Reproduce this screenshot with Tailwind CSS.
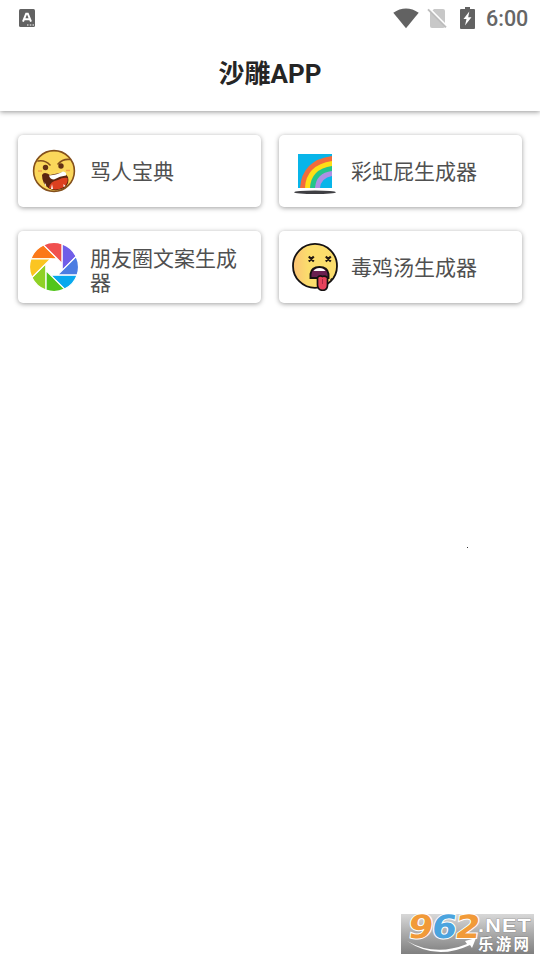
<!DOCTYPE html>
<html lang="zh-CN">
<head>
<meta charset="utf-8">
<title>沙雕APP</title>
<script src="https://cdn.jsdelivr.net/npm/@tailwindcss/browser@4"></script>
</head>
<body class="relative flex h-[960px] w-[540px] flex-col overflow-hidden bg-white font-[Roboto,'Noto_Sans_CJK_SC',sans-serif]">
<div class="relative z-10 flex h-9 shrink-0 items-center justify-between bg-white pl-[19px] pr-3">
  <svg class="h-[18px] w-4" viewBox="0 0 16 18"><rect width="16" height="18" rx="1.5" fill="#626262"/><path d="M4 12.7 7.2 4.7h1.6l3.2 8M5.4 10.2h5.2" fill="none" stroke="#fff" stroke-width="2"/><path d="M8 16h1.5M10.8 16h1.5M13.5 16H15" stroke="#fff" stroke-width="1.2"/></svg>
  <div class="flex items-center">
    <svg class="h-[21px] w-[27px]" viewBox="0 0 27 21"><path d="M.3 4.8C8.3-1.1 17.7-1.1 25.7 4.8L13 20.3Z" fill="#626262"/></svg>
    <svg class="ml-[7px] h-[21px] w-[21px]" viewBox="0 0 21 21"><path d="M3 5 7 1h9q2 0 2 2v15q0 2-2 2H5q-2 0-2-2Z" fill="#c8c8c8"/><path d="M2.5.8 20.5 18.8" stroke="#fff" stroke-width="2"/><path d="M1 1.4 19 19.4" stroke="#bdbdbd" stroke-width="1.9"/></svg>
    <svg class="ml-[12px] h-[23px] w-[15px]" viewBox="0 0 15 23"><path d="M5 0h5v2h4q1 0 1 1v18q0 1-1 1H1q-1 0-1-1V3q0-1 1-1h4Z" fill="#626262"/><path d="M9.3 4.5 3.5 12h3L5 18.5l6.5-8.2H8.2Z" fill="#fff"/></svg>
    <span class="ml-[11px] mt-[2px] w-[42px] whitespace-nowrap text-[21.5px] leading-6 font-medium text-[#666]">6:00</span>
  </div>
</div>
<header class="flex h-[75px] shrink-0 items-center justify-center bg-white shadow-[0_1px_5px_rgba(0,0,0,.42)]">
  <h1 class="text-[26px] leading-9 font-bold text-[#252525]">沙雕APP</h1>
</header>
<main class="grid grid-cols-[243px_243px] gap-x-[18px] gap-y-6 px-[18px] pt-6">
  <div class="flex h-[72px] items-center rounded-[5px] bg-white pl-3 shadow-[0_1px_5px_rgba(0,0,0,.38)]">
    <svg class="h-12 w-12 shrink-0" viewBox="0 0 48 48">
      <circle cx="24" cy="24" r="20.4" fill="#fbd75b" stroke="#84501c" stroke-width="1.6"/>
      <path d="M8 14Q15 12.500 20 18M40 12.500Q33 11.500 28 17" fill="none" stroke="#84501c" stroke-width="1.6" stroke-linecap="round"/>
      <circle cx="15.500" cy="20.500" r="2.700" fill="#623115"/><circle cx="31" cy="19" r="2.700" fill="#623115"/>
      <path d="M8 24h4M36 23.500h4" stroke="#f4a04c" stroke-width="1.3"/>
      <path d="M12 28Q14 24 20 28L34 25 38 30Q40 37 34 41 26 45 19 41.500 12 37 12 28Z" fill="#5c2510"/>
      <path d="M19 41Q20 34 28 33 33 30 37.500 31 38.500 37 33 40.500 26 44 19 41Z" fill="#dc4020"/>
      <path d="M19 28.500Q27 28 33 24.500 37 25 36 28.500 30 29 24 32.500 20 32.500 19 28.500Z" fill="#fff"/>
      <path d="m14.500 35 1.800 3.500-1 .5zm7.500 2 1 5h-2zm11.500 0 2 2-2 1z" fill="#fff"/>
    </svg>
    <span class="mt-[2px] ml-3 text-[21px] leading-6 text-[#505050]">骂人宝典</span>
  </div>
  <div class="flex h-[72px] items-center rounded-[5px] bg-white pl-3 shadow-[0_1px_5px_rgba(0,0,0,.38)]">
    <svg class="h-12 w-12 shrink-0" viewBox="0 0 48 48">
      <path d="M7 7h34v34H7z" fill="#08b5e9"/>
      <path d="M9 41Q11 13 41 9v32Z" fill="#f36b3b"/><path d="M14 41Q15 18 41 14v27Z" fill="#ffde17"/><path d="M19 41Q20 22 41 19v22Z" fill="#24c58a"/><path d="M24 41Q25 26 41 24v17Z" fill="#ad91e4"/><path d="M29 41Q30 31 41 29v12Z" fill="#08b5e9"/>
      <ellipse cx="24" cy="45.200" rx="21" ry="1.800" fill="#3f3f43"/>
    </svg>
    <span class="mt-[2px] ml-3 text-[21px] leading-6 text-[#505050]">彩虹屁生成器</span>
  </div>
  <div class="flex h-[72px] items-center rounded-[5px] bg-white pl-3 shadow-[0_1px_5px_rgba(0,0,0,.38)]">
    <svg class="h-12 w-12 shrink-0" viewBox="-23.500 -23.500 47 47">
      <defs><path id="b" d="M-22.600-8A24 24 0 0 1-10.300-21.650L3.300-8Z"/></defs>
      <g stroke="#fff" stroke-width="1.200">
        <use href="#b" fill="#fb7818"/><use href="#b" fill="#f0504f" transform="rotate(45)"/><use href="#b" fill="#705ee8" transform="rotate(90)"/><use href="#b" fill="#4c7de2" transform="rotate(135)"/><use href="#b" fill="#08a9ee" transform="rotate(180)"/><use href="#b" fill="#51c51b" transform="rotate(225)"/><use href="#b" fill="#8fd126" transform="rotate(270)"/><use href="#b" fill="#fbc522" transform="rotate(315)"/>
      </g>
    </svg>
    <span class="ml-3 mt-[7px] w-[150px] text-[21px] leading-[24px] text-[#505050]">朋友圈文案生成器</span>
  </div>
  <div class="flex h-[72px] items-center rounded-[5px] bg-white pl-3 shadow-[0_1px_5px_rgba(0,0,0,.38)]">
    <svg class="h-12 w-12 shrink-0" viewBox="0 0 48 48">
      <defs><linearGradient id="f"><stop stop-color="#fbc275"/><stop offset=".35" stop-color="#fbdd6c"/></linearGradient></defs>
      <circle cx="24" cy="22.900" r="22" fill="url(#f)" stroke="#151111" stroke-width="1.800"/>
      <path d="m17.800 13.500 5 5m0-5-5 5m17-5 5 5m0-5-5 5" stroke="#201611" stroke-width="2.100"/>
      <path d="M19.500 35v-4q1-7 9-7t9 7v4Z" fill="#6a1f50" stroke="#151111" stroke-width="1.900"/>
      <path d="M22.500 28q2-3 6-3t6 3z" fill="#fff"/>
      <path d="M26.500 34.500q2-2.500 5-1 2-1 5 1V42q0 5.300-4.800 5.300T26.500 42Z" fill="#e7435b" stroke="#151111" stroke-width="1.700"/>
      <path d="M31.500 36v5" stroke="#a92845"/><path d="m39.500 37 1.500-1.500" stroke="#222" stroke-width="1.300"/>
    </svg>
    <span class="mt-[2px] ml-3 text-[21px] leading-6 text-[#505050]">毒鸡汤生成器</span>
  </div>
</main>
<i class="absolute left-[467px] top-[547px] size-px bg-[#333]"></i>
<svg class="absolute left-[401px] top-[908px] h-[46px] w-[133px]" viewBox="0 0 133 46">
  <defs><linearGradient id="w" x2="0" y2="1"><stop stop-color="#d8d8d8"/><stop offset=".5" stop-color="#aaa"/><stop offset="1" stop-color="#808080"/></linearGradient></defs>
  <path d="M0 6h133v40H0z" fill="url(#w)"/>
  <g transform="translate(6 30) skewX(-8)" font-family="DejaVu Sans,sans-serif" font-size="32" font-weight="bold" stroke="#fff" stroke-width="2" paint-order="stroke">
    <text fill="#f19a38" textLength="25" lengthAdjust="spacingAndGlyphs">9</text><text x="23.500" fill="#4ba4de" textLength="25" lengthAdjust="spacingAndGlyphs">6</text><text x="47" fill="#f19a38" textLength="25" lengthAdjust="spacingAndGlyphs">2</text>
  </g>
  <path d="M6 33Q34 49 66 36L64 33 75 30 71 40 69 37Q35 53 6 33Z" fill="#fff"/>
  <text x="77" y="24" fill="#fff" stroke="#888" stroke-width=".7" paint-order="stroke" font-family="Liberation Sans,sans-serif" font-size="18" font-weight="bold" letter-spacing="1" textLength="54" lengthAdjust="spacingAndGlyphs">.NET</text>
  <text x="77" y="42" fill="#fff" stroke="#777" stroke-width=".7" paint-order="stroke" font-family="Noto Sans CJK SC,sans-serif" font-size="15.500" font-weight="bold" textLength="51">乐游网</text>
</svg>
</body>
</html>
